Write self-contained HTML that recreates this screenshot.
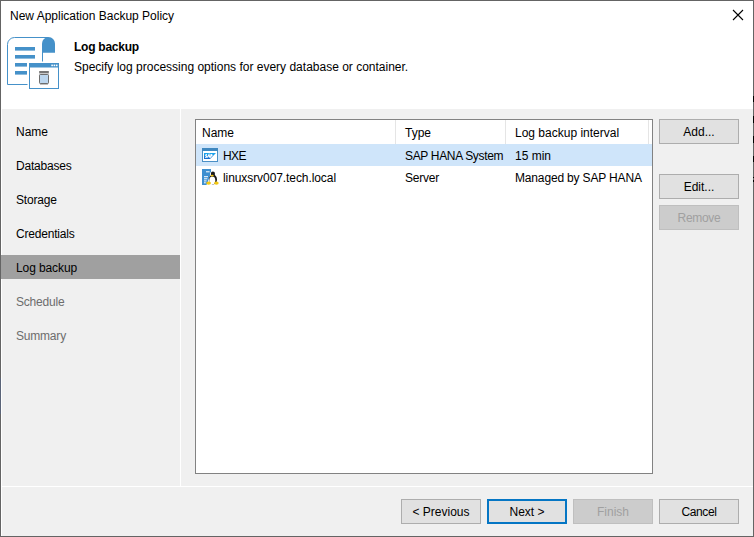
<!DOCTYPE html>
<html><head><meta charset="utf-8">
<style>
*{box-sizing:border-box;margin:0;padding:0}
html,body{width:754px;height:537px;overflow:hidden;background:#f0f0f0}
body{position:relative;font-family:"Liberation Sans",sans-serif;font-size:12px;color:#000}
.a{position:absolute;white-space:nowrap;line-height:14px}
#win{position:absolute;left:0;top:0;width:754px;height:537px;border:1px solid #646464;background:#f0f0f0}
#hdr{position:absolute;left:1px;top:1px;width:752px;height:108px;background:#fff}
.btn{position:absolute;width:80px;height:25px;background:#e1e1e1;border:1px solid #adadad;text-align:center;line-height:24px}
.btn.dis{background:#cccccc;border-color:#bfbfbf;color:#a0a0a0}
.btn.def{border:2px solid #0576c4;line-height:22px}
.nav{position:absolute;left:16px}
.hsep{position:absolute;top:120px;width:1px;height:24px;background:#e5e5e5}
</style></head><body>
<div id="win"></div>
<div id="hdr"></div>
<div class="a" style="left:10px;top:9px">New Application Backup Policy</div>
<svg style="position:absolute;left:732px;top:9px" width="12" height="12" viewBox="0 0 12 12"><path d="M1 1L11 11M11 1L1 11" stroke="#000" stroke-width="1.1" fill="none"/></svg>

<!-- header icon -->
<svg style="position:absolute;left:0;top:30px" width="70" height="65" viewBox="0 30 70 65">
 <g fill="none" stroke="#4591c9" stroke-width="1">
  <path d="M27.5 84.5H7.5V44.5A7 7 0 0 1 14.5 37.5H48"/>
  <path d="M42.5 52V61.5"/>
  <rect x="29.5" y="63.5" width="29" height="25"/>
 </g>
 <g fill="#4591c9">
  <path d="M42 52.7V43.5A6.5 6.5 0 0 1 48.5 37A6.5 6.5 0 0 1 55 43.5V52.7Z"/>
  <rect x="15" y="47" width="20" height="3.6"/>
  <rect x="15" y="55" width="20" height="3.6"/>
  <rect x="15" y="63" width="12" height="3.6"/>
  <rect x="15" y="71" width="12" height="3.6"/>
  <rect x="29" y="63" width="30" height="4.5"/>
 </g>
 <g fill="#fff"><rect x="51.3" y="64.6" width="1.6" height="1.6"/><rect x="53.6" y="64.6" width="1.6" height="1.6"/><rect x="55.9" y="64.6" width="1.6" height="1.6"/></g>
 <rect x="39" y="71" width="10" height="2" rx="0.8" fill="#767676"/>
 <rect x="39" y="73" width="10" height="1" fill="#c9c9c9"/>
 <rect x="39.5" y="74.5" width="9" height="9" rx="0.7" fill="#bcd6ee" stroke="#6e6e6e" stroke-width="1"/>
 <rect x="40" y="84" width="8" height="0.8" fill="#b0b0b0"/>
</svg>

<div class="a" style="left:74px;top:40px;font-weight:bold;letter-spacing:-0.25px">Log backup</div>
<div class="a" style="left:74px;top:60px">Specify log processing options for every database or container.</div>

<!-- nav -->
<div style="position:absolute;left:1px;top:109px;width:1px;height:427px;background:#fff"></div>
<div style="position:absolute;left:180px;top:109px;width:1px;height:377px;background:#fff"></div>
<div style="position:absolute;left:1px;top:255px;width:179px;height:24px;background:#a0a0a0"></div>
<div class="a nav" style="top:125px">Name</div>
<div class="a nav" style="top:159px;letter-spacing:-0.2px">Databases</div>
<div class="a nav" style="top:193px;letter-spacing:-0.2px">Storage</div>
<div class="a nav" style="top:227px;letter-spacing:-0.2px">Credentials</div>
<div class="a nav" style="top:261px;letter-spacing:-0.1px">Log backup</div>
<div class="a nav" style="top:295px;color:#6d6d6d;letter-spacing:-0.2px">Schedule</div>
<div class="a nav" style="top:329px;color:#6d6d6d;letter-spacing:-0.2px">Summary</div>

<!-- list -->
<div style="position:absolute;left:195px;top:119px;width:458px;height:355px;background:#fff;border:1px solid #828282"></div>
<div class="hsep" style="left:395px"></div>
<div class="hsep" style="left:505px"></div>
<div class="hsep" style="left:648px"></div>
<div class="a" style="left:202px;top:126px">Name</div>
<div class="a" style="left:405px;top:126px">Type</div>
<div class="a" style="left:515px;top:126px">Log backup interval</div>
<div style="position:absolute;left:196px;top:144px;width:456px;height:22px;background:#cfe5fa"></div>
<svg style="position:absolute;left:202px;top:148px" width="16" height="14" viewBox="0 0 16 14">
 <defs><linearGradient id="sg" x1="0" y1="0" x2="0" y2="1"><stop offset="0" stop-color="#1aaaf0"/><stop offset="1" stop-color="#1566cc"/></linearGradient></defs>
 <rect x="0" y="0" width="16" height="14" fill="#4a90c6"/>
 <rect x="0" y="0" width="16" height="3" fill="#3f88c0"/>
 <rect x="1" y="3" width="14" height="10" fill="#fff"/>
 <path d="M2 5H14L8 11H2Z" fill="url(#sg)"/>
 <path d="M3.2 9.3C4.5 9.6 5.3 8.6 4.2 7.9C3.3 7.4 3.6 6.4 5 6.7M5.5 9.6L7 6.5L7.8 9.6M8.5 9.6L9 6.5C10.3 6.4 10.6 7.6 9.2 8.2" fill="none" stroke="#fff" stroke-width="1.1"/>
</svg>
<div class="a" style="left:223px;top:149px;letter-spacing:-0.6px">HXE</div>
<div class="a" style="left:405px;top:149px;letter-spacing:-0.33px">SAP HANA System</div>
<div class="a" style="left:515px;top:149px">15 min</div>
<svg style="position:absolute;left:202px;top:169px" width="17" height="17" viewBox="0 0 17 17">
 <path d="M0 0H9V3L8 4V7L4.5 16H0Z" fill="#3d8fd0"/>
 <g fill="#fff"><rect x="4" y="2.3" width="3.6" height="1"/><rect x="2" y="7.2" width="4" height="1"/><rect x="2" y="9.3" width="3.4" height="1"/><rect x="2" y="11.4" width="2.6" height="1"/><rect x="2" y="13.3" width="1.8" height="1"/></g>
 <ellipse cx="11" cy="10.5" rx="4" ry="5" fill="#1a1a1a"/>
 <ellipse cx="10.3" cy="11.4" rx="3" ry="3.9" fill="#fff"/>
 <ellipse cx="10.9" cy="5" rx="2.1" ry="2.4" fill="#1a1a1a"/>
 <ellipse cx="10.2" cy="6.6" rx="1.5" ry="0.9" fill="#f2c40a"/>
 <ellipse cx="6.6" cy="14.1" rx="2.4" ry="1.6" fill="#f4c810"/>
 <ellipse cx="14.4" cy="14.1" rx="2.3" ry="1.6" fill="#f4c810"/>
</svg>
<div class="a" style="left:223px;top:171px;letter-spacing:-0.08px">linuxsrv007.tech.local</div>
<div class="a" style="left:405px;top:171px;letter-spacing:-0.2px">Server</div>
<div class="a" style="left:515px;top:171px;letter-spacing:-0.16px">Managed by SAP HANA</div>

<!-- right buttons -->
<div class="btn" style="left:659px;top:119px">Add...</div>
<div class="btn" style="left:659px;top:174px">Edit...</div>
<div class="btn dis" style="left:659px;top:205px;letter-spacing:-0.3px">Remove</div>

<!-- bottom -->
<div style="position:absolute;left:1px;top:486px;width:752px;height:1px;background:#fff"></div>
<div class="btn" style="left:401px;top:499px">&lt; Previous</div>
<div class="btn def" style="left:487px;top:499px">Next &gt;</div>
<div class="btn dis" style="left:573px;top:499px">Finish</div>
<div class="btn" style="left:659px;top:499px;letter-spacing:-0.4px">Cancel</div>
<!-- edge -->
<div style="position:absolute;left:0;top:378px;width:1px;height:36px;background:#5a6478"></div>
<div style="position:absolute;left:753px;top:96px;width:1px;height:6px;background:#000"></div><div style="position:absolute;left:753px;top:116px;width:1px;height:7px;background:#000"></div><div style="position:absolute;left:753px;top:136px;width:1px;height:7px;background:#000"></div><div style="position:absolute;left:753px;top:156px;width:1px;height:6px;background:#000"></div><div style="position:absolute;left:753px;top:177px;width:1px;height:1px;background:#000"></div><div style="position:absolute;left:753px;top:180px;width:1px;height:2px;background:#000"></div>
</body></html>
